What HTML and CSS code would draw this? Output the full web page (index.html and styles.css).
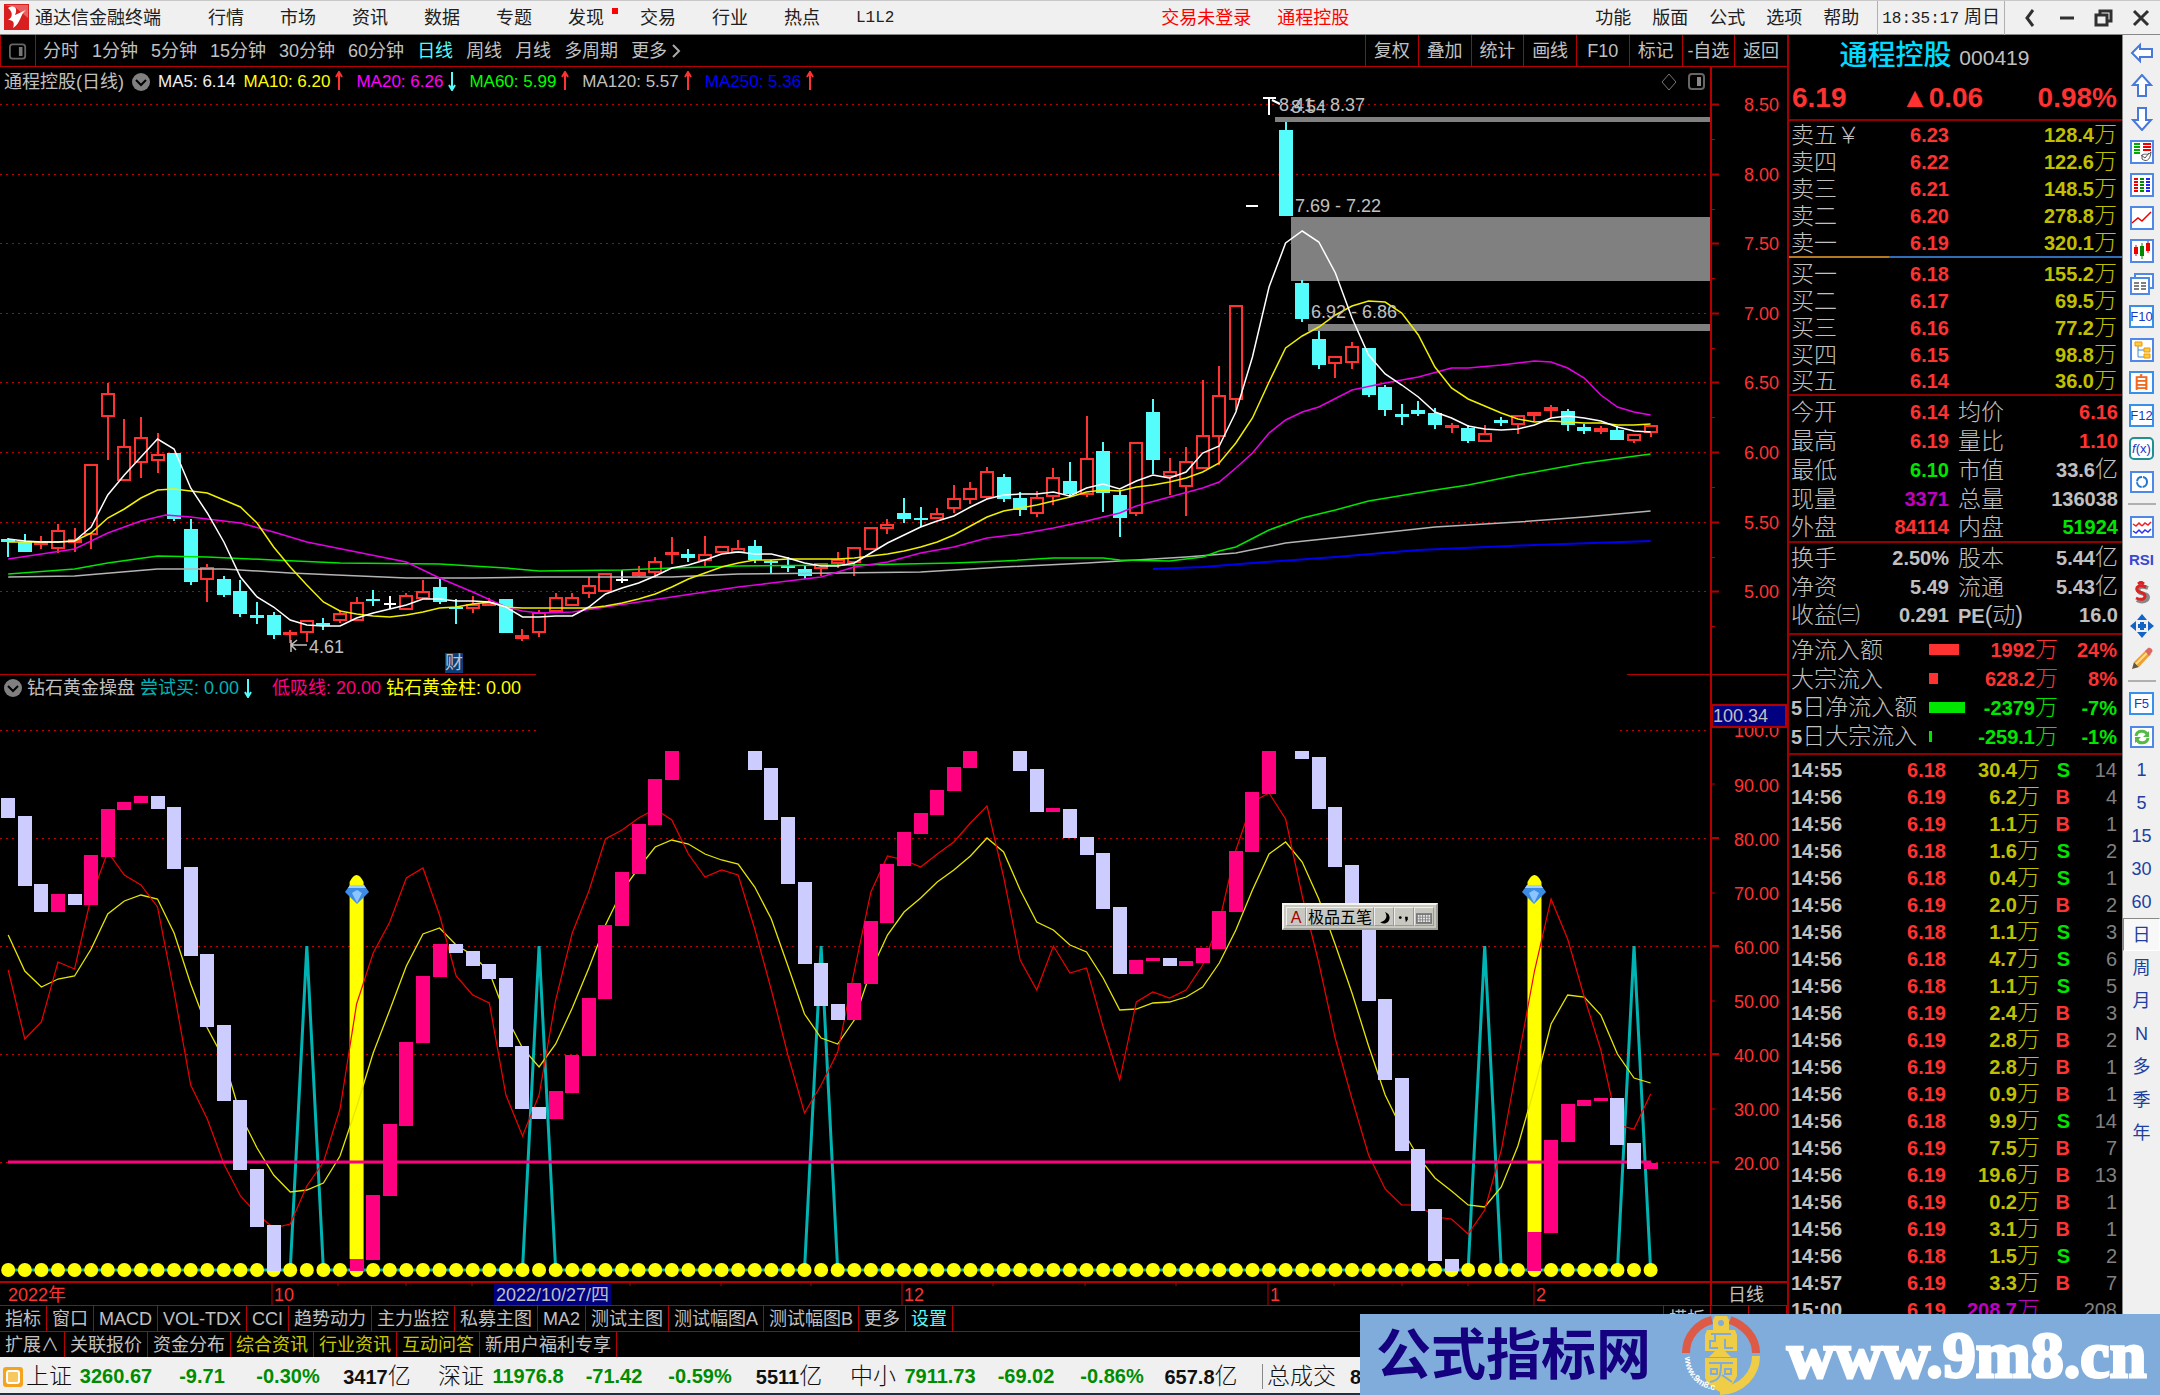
FILE: index.html
```html
<!DOCTYPE html>
<html lang="zh-CN">
<head>
<meta charset="utf-8">
<title>通达信金融终端</title>
<link rel="stylesheet" href="styles.css">
</head>
<body>
<header class="topbar">
  <svg class="logo" viewBox="0 0 25 26" aria-hidden="true"><rect width="25" height="26" fill="#d81e1e"/><path d="M1 1h23v13L12 4z" fill="#e86060"/><path d="M4 4c7-4 10 1 7 7l11-5c-6 4-5 13-13 18 2-6 0-8-5-8 5-3 5-8 0-12z" fill="#fff"/></svg>
  <span class="brand">通达信金融终端</span>
  <nav class="menu">
    <button>行情</button><button>市场</button><button>资讯</button><button>数据</button><button>专题</button><button class="has-dot">发现</button><button>交易</button><button>行业</button><button>热点</button><button class="mono">L1L2</button>
  </nav>
  <div class="session"><a href="#login">交易未登录</a><a href="#stock">通程控股</a></div>
  <nav class="menu menu-right"><button>功能</button><button>版面</button><button>公式</button><button>选项</button><button>帮助</button></nav>
  <time class="clock"><span class="mono">18:35:17</span> 周日</time>
  <div class="window-buttons">
    <button aria-label="后退"><svg viewBox="0 0 22 22"><path d="M14 3 8 11l6 8" /></svg></button>
    <button aria-label="最小化"><svg viewBox="0 0 22 22"><path d="M4 11h14"/></svg></button>
    <button aria-label="还原"><svg viewBox="0 0 22 22"><path d="M7 8V4h11v10h-4M3 8h11v10H3z"/></svg></button>
    <button aria-label="关闭"><svg viewBox="0 0 22 22"><path d="m4 4 14 14M18 4 4 18"/></svg></button>
  </div>
</header>

<main class="workspace">
  <section class="charts">
    <div class="periods">
      <button class="pane-toggle" aria-label="侧栏"><svg viewBox="0 0 20 18"><rect x="1" y="1" width="17" height="16" rx="3" fill="none" stroke="#666" stroke-width="2"/><path d="M11 4h4v10h-4z" fill="#777"/></svg></button>
      <nav class="period-list">
        <button>分时</button><button>1分钟</button><button>5分钟</button><button>15分钟</button><button>30分钟</button><button>60分钟</button><button class="active">日线</button><button>周线</button><button>月线</button><button>多周期</button><button>更多<svg class="more" viewBox="0 0 10 16"><path d="m2 2 6 6-6 6"/></svg></button>
      </nav>
      <div class="chart-actions">
        <button>复权</button><button>叠加</button><button>统计</button><button>画线</button><button>F10</button><button>标记</button><button>-自选</button><button>返回</button>
      </div>
    </div>

    <div class="legend">
      <div class="legend-items">
        <span>通程控股(日线)</span>
        <svg class="chev" viewBox="0 0 18 18"><circle cx="9" cy="9" r="9" fill="#808080"/><path d="m4 7 5 5 5-5" fill="none" stroke="#000" stroke-width="2"/></svg>
        <span class="c-white">MA5: 6.14</span>
        <span class="c-yellow">MA10: 6.20<svg class="arrow up" viewBox="0 0 8 20"><path d="M4 1v18M1 6l3-5 3 5"/></svg></span>
        <span class="c-magenta">MA20: 6.26<svg class="arrow down" viewBox="0 0 8 20"><path d="M4 1v18M1 14l3 5 3-5"/></svg></span>
        <span class="c-green">MA60: 5.99<svg class="arrow up" viewBox="0 0 8 20"><path d="M4 1v18M1 6l3-5 3 5"/></svg></span>
        <span>MA120: 5.57<svg class="arrow up" viewBox="0 0 8 20"><path d="M4 1v18M1 6l3-5 3 5"/></svg></span>
        <span class="c-blue">MA250: 5.36<svg class="arrow up" viewBox="0 0 8 20"><path d="M4 1v18M1 6l3-5 3 5"/></svg></span>
        <svg class="legend-tools" viewBox="0 0 46 18"><path d="m9 1 7 8-7 8-7-8z" fill="none" stroke="#777"/><rect x="29" y="1" width="15" height="15" rx="3" fill="none" stroke="#666" stroke-width="2"/><path d="M37 4h4v9h-4z" fill="#888"/></svg>
      </div>
      <div class="axis-head"></div>
    </div>
    <svg id="price" class="plot" viewBox="0 93 1787 581" role="img" aria-label="日K线图"></svg>

    <div class="sub-panel">
      <div class="legend">
        <div class="legend-items sub-items">
          <svg class="chev" viewBox="0 0 18 18"><circle cx="9" cy="9" r="9" fill="#808080"/><path d="m4 7 5 5 5-5" fill="none" stroke="#000" stroke-width="2"/></svg>
          <span>钻石黄金操盘</span>
          <span class="c-teal">尝试买: 0.00<svg class="arrow down" viewBox="0 0 8 20"><path d="M4 1v18M1 14l3 5 3-5"/></svg></span>
          <span class="c-pink">低吸线: 20.00</span>
          <span class="c-yellow">钻石黄金柱: 0.00</span>
        </div>
        <div class="axis-head"></div>
      </div>
      <svg id="signal" class="plot" viewBox="0 701 1787 604" role="img" aria-label="钻石黄金操盘指标"></svg>
      <div class="ime">
        <span class="ime-a">A</span><span>极品五笔</span>
        <span><svg viewBox="0 0 14 16"><path d="M8 1c3 4 2 9-5 11 4 3 10 1 10-5 0-3-2-5-5-6z"/></svg></span>
        <span><svg viewBox="0 0 14 16"><circle cx="3" cy="7" r="1.500"/><path d="M8 6h3v3l-2 3z"/></svg></span>
        <span><svg viewBox="0 0 18 14"><rect x="0" y="1" width="18" height="12" fill="#777"/><path d="M2 4h14M2 7h14M2 10h14" stroke="#eee" stroke-width="2" stroke-dasharray="2 1"/></svg></span>
      </div>
    </div>

    <nav class="tabs">
      <button>指标</button><button>窗口</button><button>MACD</button><button>VOL-TDX</button><button>CCI</button><button>趋势动力</button><button>主力监控</button><button>私募主图</button><button>MA2</button><button>测试主图</button><button>测试幅图A</button><button>测试幅图B</button><button>更多</button><button class="c-cyan">设置</button>
      <button class="push">模板</button><button class="sq">+</button><button class="sq">-</button>
    </nav>
    <nav class="tabs">
      <button>扩展∧</button><button>关联报价</button><button>资金分布</button><button class="c-olive">综合资讯</button><button class="c-olive">行业资讯</button><button class="c-olive">互动问答</button><button>新用户福利专享</button>
    </nav>
  </section>

  <aside class="quote">
    <div class="quote-head">
      <h1>通程控股 <span>000419</span></h1>
      <p><span>6.19</span><span class="chg">▲0.06</span><span>0.98%</span></p>
    </div>
    <table class="book">
      <tr><th>卖五￥</th><td class="r">6.23</td><td>128.4<i>万</i></td></tr>
      <tr><th>卖四</th><td class="r">6.22</td><td>122.6<i>万</i></td></tr>
      <tr><th>卖三</th><td class="r">6.21</td><td>148.5<i>万</i></td></tr>
      <tr><th>卖二</th><td class="r">6.20</td><td>278.8<i>万</i></td></tr>
      <tr><th>卖一</th><td class="r">6.19</td><td>320.1<i>万</i></td></tr>
    </table>
    <div class="ratio"><span></span></div>
    <table class="book">
      <tr><th>买一</th><td class="r">6.18</td><td>155.2<i>万</i></td></tr>
      <tr><th>买二</th><td class="r">6.17</td><td>69.5<i>万</i></td></tr>
      <tr><th>买三</th><td class="r">6.16</td><td>77.2<i>万</i></td></tr>
      <tr><th>买四</th><td class="r">6.15</td><td>98.8<i>万</i></td></tr>
      <tr><th>买五</th><td class="r">6.14</td><td>36.0<i>万</i></td></tr>
    </table>
    <table class="stats first">
      <tr><th>今开</th><td class="r">6.14</td><th>均价</th><td class="r">6.16</td></tr>
      <tr><th>最高</th><td class="r">6.19</td><th>量比</th><td class="r">1.10</td></tr>
      <tr><th>最低</th><td class="g">6.10</td><th>市值</th><td>33.6<i>亿</i></td></tr>
      <tr><th>现量</th><td class="m">3371</td><th>总量</th><td>136038</td></tr>
      <tr><th>外盘</th><td class="r">84114</td><th>内盘</th><td class="g">51924</td></tr>
    </table>
    <table class="stats loose">
      <tr><th>换手</th><td>2.50%</td><th>股本</th><td>5.44<i>亿</i></td></tr>
      <tr><th>净资</th><td>5.49</td><th>流通</th><td>5.43<i>亿</i></td></tr>
      <tr><th>收益㈢</th><td>0.291</td><th><b>PE</b>(动)</th><td>16.0</td></tr>
    </table>
    <table class="flow">
      <tr class="r"><th>净流入额</th><td><span class="bar" style="width:30px"></span></td><td>1992<i>万</i></td><td>24%</td></tr>
      <tr class="r"><th>大宗流入</th><td><span class="bar" style="width:9px"></span></td><td>628.2<i>万</i></td><td>8%</td></tr>
      <tr class="g"><th><b>5</b>日净流入额</th><td><span class="bar" style="width:36px"></span></td><td>-2379<i>万</i></td><td>-7%</td></tr>
      <tr class="g"><th><b>5</b>日大宗流入</th><td><span class="bar" style="width:3px"></span></td><td>-259.1<i>万</i></td><td>-1%</td></tr>
    </table>
    <table class="ticks">
      <tr><td>14:55</td><td>6.18</td><td>30.4<i>万</i></td><td class="g">S</td><td>14</td></tr>
      <tr><td>14:56</td><td>6.19</td><td>6.2<i>万</i></td><td class="r">B</td><td>4</td></tr>
      <tr><td>14:56</td><td>6.19</td><td>1.1<i>万</i></td><td class="r">B</td><td>1</td></tr>
      <tr><td>14:56</td><td>6.18</td><td>1.6<i>万</i></td><td class="g">S</td><td>2</td></tr>
      <tr><td>14:56</td><td>6.18</td><td>0.4<i>万</i></td><td class="g">S</td><td>1</td></tr>
      <tr><td>14:56</td><td>6.19</td><td>2.0<i>万</i></td><td class="r">B</td><td>2</td></tr>
      <tr><td>14:56</td><td>6.18</td><td>1.1<i>万</i></td><td class="g">S</td><td>3</td></tr>
      <tr><td>14:56</td><td>6.18</td><td>4.7<i>万</i></td><td class="g">S</td><td>6</td></tr>
      <tr><td>14:56</td><td>6.18</td><td>1.1<i>万</i></td><td class="g">S</td><td>5</td></tr>
      <tr><td>14:56</td><td>6.19</td><td>2.4<i>万</i></td><td class="r">B</td><td>3</td></tr>
      <tr><td>14:56</td><td>6.19</td><td>2.8<i>万</i></td><td class="r">B</td><td>2</td></tr>
      <tr><td>14:56</td><td>6.19</td><td>2.8<i>万</i></td><td class="r">B</td><td>1</td></tr>
      <tr><td>14:56</td><td>6.19</td><td>0.9<i>万</i></td><td class="r">B</td><td>1</td></tr>
      <tr><td>14:56</td><td>6.18</td><td>9.9<i>万</i></td><td class="g">S</td><td>14</td></tr>
      <tr><td>14:56</td><td>6.19</td><td>7.5<i>万</i></td><td class="r">B</td><td>7</td></tr>
      <tr><td>14:56</td><td>6.19</td><td>19.6<i>万</i></td><td class="r">B</td><td>13</td></tr>
      <tr><td>14:56</td><td>6.19</td><td>0.2<i>万</i></td><td class="r">B</td><td>1</td></tr>
      <tr><td>14:56</td><td>6.19</td><td>3.1<i>万</i></td><td class="r">B</td><td>1</td></tr>
      <tr><td>14:56</td><td>6.18</td><td>1.5<i>万</i></td><td class="g">S</td><td>2</td></tr>
      <tr><td>14:57</td><td>6.19</td><td>3.3<i>万</i></td><td class="r">B</td><td>7</td></tr>
      <tr><td>15:00</td><td>6.19</td><td class="m">208.7<i>万</i></td><td></td><td>208</td></tr>
    </table>
  </aside>

  <nav class="tools">
    <button aria-label="左"><svg viewBox="0 0 24 24"><path class="ar" d="M2 12 10 4v4h12v8H10v4z"/></svg></button>
    <button aria-label="上"><svg viewBox="0 0 24 24"><path class="ar" d="M12 1 3 11h5v11h8V11h5z"/></svg></button>
    <button aria-label="下"><svg viewBox="0 0 24 24"><path class="ar" d="M12 23 3 13h5V1h8v12h5z"/></svg></button>
    <button aria-label="委托"><svg viewBox="0 0 24 24"><rect class="fr" x="1" y="1" width="22" height="22"/><path d="M4 4h6M4 7h6M4 10h6M4 13h6" stroke="#0a0" stroke-width="2"/><path d="M13 4h8M13 7h8M13 10h8" stroke="#e00" stroke-width="2"/><path d="M12 15c3-2 6 1 9-3-1 9-5 10-9 7zM11 15l4 3 4-5" fill="#fff" stroke="#555"/></svg></button>
    <button aria-label="报价"><svg viewBox="0 0 24 24"><rect class="fr" x="1" y="1" width="22" height="22"/><g stroke-width="4" stroke-dasharray="2 1"><path d="M6 5v15" stroke="#e00"/><path d="M12 5v15" stroke="#080"/><path d="M18 5v15" stroke="#22f"/></g></svg></button>
    <button aria-label="走势"><svg viewBox="0 0 24 24"><rect class="fr" x="1" y="1" width="22" height="22"/><path d="m2 17 6-5 4 3 9-9" fill="none" stroke="#e00" stroke-width="1.500"/></svg></button>
    <button aria-label="K线"><svg viewBox="0 0 24 24"><rect class="fr" x="1" y="1" width="22" height="22"/><path d="M6 6v11M18 2v12" stroke="#e00"/><path d="M12 4v16" stroke="#080"/><path d="M4 8h4v7H4zM16 4h4v8h-4z" fill="#e00"/><path d="M10 7h4v10h-4z" fill="#080"/></svg></button>
    <button aria-label="多窗"><svg viewBox="0 0 24 24"><rect class="fr" x="5" y="2" width="18" height="14"/><rect class="fr" x="1" y="6" width="18" height="16"/><path d="M4 11h5M4 14h5M4 17h5M11 11h5M11 14h5M11 17h5" stroke="#555" stroke-width="1.500"/></svg></button>
    <button class="boxed">F10</button>
    <button aria-label="树"><svg viewBox="0 0 24 24"><rect class="fr" x="1" y="1" width="22" height="22"/><path d="M8 8v11h7M8 12h7" fill="none" stroke="#48c"/><path d="M5 4h7v4H5zM14 10h6v4h-6zM14 16h6v4h-6z" fill="#fc4" stroke="#e90"/></svg></button>
    <button class="boxed orange">自</button>
    <button class="boxed">F12</button>
    <button class="boxed round"><em>f</em>(x)</button>
    <button aria-label="刷新圈"><svg viewBox="0 0 24 24"><rect class="fr" x="1" y="2" width="22" height="20"/><circle cx="12" cy="12" r="5" fill="none" stroke="#27c" stroke-width="2" stroke-dasharray="7 1"/></svg></button>
    <hr>
    <button aria-label="叠加"><svg viewBox="0 0 24 24"><rect class="fr" x="1" y="2" width="22" height="20"/><g fill="none" stroke-width="1.500"><path d="m3 9 3 2 3-3 3 3" stroke="#e22"/><path d="m12 11 3-3 3 2 3-3" stroke="#e22"/><path d="m3 16 3 2 3-3 3 3 3-3 3 2 3-3" stroke="#33e"/></g></svg></button>
    <button class="rsi">RSI</button>
    <button aria-label="资金"><svg viewBox="0 0 24 24"><path d="M18 7c-8-3-11 0-9 4 1 2 9 1 9 5s-6 6-11 3" fill="none" stroke="#888" stroke-width="4"/><path d="M16 6C9 3 6 6 7 9c1 3 8 2 8 6s-5 4-9 2M8 3l3-2 3 2" fill="none" stroke="#d22" stroke-width="3"/></svg></button>
    <button aria-label="移动"><svg viewBox="0 0 24 24"><path d="m12 0 5 6H7zM12 24l-5-6h10zM0 12l6-5v10zM24 12l-6 5V7zM10 8h4v2h2v4h-2v2h-4v-2H8v-4h2z" fill="#1464c8"/></svg></button>
    <button aria-label="画笔"><svg viewBox="0 0 24 24"><path d="m2 22 2-7 5 5z" fill="#654"/><path d="M4 15 16 3l5 4L9 20z" fill="#f0a030"/><path d="M6 17 18 5" stroke="#fd8" stroke-width="2"/><path d="m15 4 3-3c2-1 6 2 4 4l-3 4z" fill="#d66"/></svg></button>
    <hr>
    <button class="boxed">F5</button>
    <button aria-label="更新"><svg viewBox="0 0 24 24"><rect class="fr" x="1" y="2" width="22" height="20"/><path d="M6 11c1-6 9-6 11-2M18 13c-1 6-9 6-11 2" fill="none" stroke="#5b4" stroke-width="3"/><path d="M19 6v6h-6zM5 18v-6h6z" fill="#5b4"/></svg></button>
    <button>1</button><button>5</button><button>15</button><button>30</button><button>60</button><button class="pressed">日</button><button>周</button><button>月</button><button>N</button><button>多</button><button>季</button><button>年</button>
  </nav>
</main>

<footer class="status">
  <svg class="status-icon" viewBox="0 0 20 20"><rect width="20" height="20" rx="3" fill="#f5a31c"/><rect x="4" y="4" width="12" height="12" rx="2" fill="#f8c860" stroke="#fff" stroke-width="2"/></svg>
  <div class="index"><i>上证</i><span>3260.67</span><span>-9.71</span><span>-0.30%</span><b>3417<i>亿</i></b></div>
  <div class="index"><i>深证</i><span>11976.8</span><span>-71.42</span><span>-0.59%</span><b>5511<i>亿</i></b></div>
  <div class="index"><i>中小</i><span>7911.73</span><span>-69.02</span><span>-0.86%</span><b>657.8<i>亿</i></b></div>
  <div class="turnover"><i>总成交</i><b>8325<i>亿</i></b></div>
</footer>

<a class="banner" href="#home">
  <span class="banner-name">公式指标网</span>
  <svg viewBox="0 0 80 80" aria-hidden="true">
    <path d="M5 38C5 20 18 8 31 5M49 5c14 5 26 17 26 33" fill="none" stroke="#dc5a46" stroke-width="8"/>
    <path d="M75 41c0 18-14 34-36 35" fill="none" stroke="#f0cd46" stroke-width="8"/>
    <path d="M34 1h12l2 4v10h6l2 5v16H44l6 6H28l6-6H24V20l2-5h6V5z" fill="#f0cd46"/>
    <path d="M24 43h32v18c-5 10-10 14-16 16-6-2-12-6-16-14z" fill="#f0cd46"/>
    <circle cx="40" cy="8" r="3" fill="#80acdb"/>
    <path d="M30 19h20M34 19v7h-5v7h8M44 24v9h8M28 48h24M30 54h6v5h-6zM44 54h6v5h-6zM29 67c10-2 11-6 11-19M41 60l10 7" fill="none" stroke="#80acdb" stroke-width="2"/>
    <path id="coin" d="M4 42c0 17 12 30 28 33" fill="none"/>
    <text class="coin-text"><textPath href="#coin">www.9m8.cn</textPath></text>
  </svg>
  <span class="banner-url">www.9m8.cn</span>
</a>
<script src="chart.js"></script>
</body>
</html>
```
FILE: styles.css
```css
* { box-sizing: border-box; }
body {
  margin: 0;
  min-height: 100vh;
  display: flex;
  flex-direction: column;
  background: #000;
  color: #c0c0c0;
  font: 18px/24px "Liberation Sans", "Noto Sans CJK SC", sans-serif;
  white-space: nowrap;
}
button { font: inherit; color: inherit; background: none; border: 0; padding: 0; margin: 0; }
a { color: inherit; text-decoration: none; }
i { font-style: normal; }
.mono { font-family: "Liberation Mono", monospace; font-size: 16px; }

/* top bar */
.topbar {
  display: flex;
  align-items: center;
  height: 35px;
  border-top: 1px solid #c8c8c8;
  border-bottom: 1px solid #888;
  background: #f0f0f0;
  color: #202020;
}
.logo { width: 25px; height: 26px; margin: 0 6px 2px 4px; }
.menu { display: flex; gap: 36px; margin-left: 47px; }
.has-dot { position: relative; }
.has-dot::after { content: ""; position: absolute; right: -14px; top: 2px; width: 6px; height: 6px; background: #f00; }
.session { display: flex; gap: 26px; margin-left: auto; color: #f00; }
.menu-right { gap: 21px; margin-left: 246px; }
.clock { margin-left: 18px; padding: 4px 4px; border: solid #b0b0b0; border-width: 0 1px; }
.window-buttons { display: flex; gap: 15px; padding: 0 8px 0 14px; }
.window-buttons svg { display: block; width: 22px; height: 22px; fill: none; stroke: #303030; stroke-width: 3; }

.workspace { display: grid; grid-template-columns: minmax(0, 1fr) 336px 37px; }

/* chart side */
.periods { display: flex; height: 32px; border-bottom: 1px solid #b40000; }
.pane-toggle { width: 36px; border: solid #b40000; border-width: 0 1px; }
.pane-toggle svg { width: 18px; height: 17px; vertical-align: middle; }
.period-list { display: flex; align-items: center; gap: 13px; padding: 1px 0 0 7px; }
.period-list .active { color: #54fcfc; }
.more { width: 10px; height: 16px; margin-left: 4px; fill: none; stroke: #aaa; stroke-width: 2; vertical-align: -2px; }
.chart-actions { display: grid; grid-template-columns: repeat(8, 1fr); width: 422px; margin-left: auto; }
.chart-actions button { border-left: 1px solid #b40000; padding-top: 1px; }

.legend { display: flex; height: 26px; }
.legend-items { flex: 1; display: flex; align-items: center; gap: 8px; padding: 3px 0 0 4px; font-size: 17px; }
.legend-items > span:first-child { font-size: 18px; }
.axis-head { width: 77px; border-left: 2px solid #b40000; }
.chev { width: 18px; height: 18px; }
.arrow { width: 8px; height: 20px; margin: 0 5px; fill: none; stroke-width: 2; vertical-align: -4px; }
.arrow.up { stroke: #ff3232; }
.arrow.down { stroke: #54fcfc; }
.legend-tools { width: 46px; height: 18px; margin: 0 4px 0 auto; }
.plot { display: block; width: 100%; height: auto; }
.plot text { font-size: 18px; fill: #c0c0c0; }
.plot .ax { fill: #ff3232; }
.plot rect { shape-rendering: crispEdges; }

.sub-panel { position: relative; border-top: 1px solid transparent; border-image: linear-gradient(90deg, #b40000 30%, #000 30%, #000 91%, #b40000 91%) 1; border-width: 1px 0 0; }
.sub-items { font-size: 18px; gap: 5px; padding-top: 0; }
.sub-items .c-teal { padding-right: 10px; }

.ime {
  position: absolute;
  left: 71.740%;
  top: 228px;
  display: flex;
  height: 27px;
  padding: 2px;
  background: #c8c8c0;
  border: 2px outset #f4f4ec;
  color: #000;
  font-size: 16px;
  line-height: 19px;
}
.ime span { padding: 0 1px; border: 1px outset #eee; }
.ime svg { width: 16px; height: 15px; vertical-align: middle; }
.ime-a { color: #a00000; width: 20px; text-align: center; }

.tabs { display: flex; height: 26px; border-top: 1px solid #b40000; }
.tabs button { padding: 1px 5px 0; border-right: 1px solid #b40000; }
.tabs .push { margin-left: auto; border-left: 1px solid #b40000; }
.tabs .sq { width: 38px; }

.c-white { color: #f0f0f0; }
.c-yellow { color: #ff0; }
.c-magenta { color: #f0f; }
.c-green { color: #0f0; }
.c-blue { color: #00f; }
.c-teal { color: #00b4b4; }
.c-pink { color: #ff0080; }
.c-cyan { color: #54fcfc; }
.c-olive { color: #c8c800; }

/* quote panel */
.quote { border-left: 2px solid #a00000; border-right: 1px solid #888; font-size: 20px; font-weight: 700; }
.quote-head { height: 86px; border-bottom: 2px solid #900000; padding-top: 3px; }
.quote-head h1 { margin: 0; padding-right: 42px; font-size: 28px; line-height: 36px; font-weight: 500; color: #00dcff; text-align: center; }
.quote-head h1 span { font-size: 21px; color: #c0c0c0; font-weight: 400; }
.quote-head p { display: flex; justify-content: space-between; margin: 0; padding: 6px 5px 0 3px; font-size: 28px; line-height: 32px; color: #ff3232; }
.quote table { width: 100%; table-layout: fixed; border-collapse: collapse; border-bottom: 2px solid #900000; }
.quote tr { height: 27px; }
.quote td, .quote th { padding: 0; line-height: 26px; text-align: right; }
.quote th { font-size: 23px; font-weight: 300; text-align: left; padding-left: 2px; }
.quote th b { font-size: 20px; font-weight: 700; }
.quote i { font-size: 23px; font-weight: 300; line-height: 20px; }
.quote td:last-child { padding-right: 5px; }
.book th { width: 81px; }
.book td:nth-child(2) { width: 79px; }
.book td:last-child { color: #c0c000; }
.quote .book:first-of-type { border: 0; }
.ratio { height: 4px; border-bottom: 2px solid #000; background: #2f6eb4; }
.ratio span { display: block; width: 30%; height: 2px; background: #b4781e; }
.quote .stats tr, .quote .flow tr { height: 29px; }
.stats th:first-child { width: 81px; }
.stats td:nth-child(2) { width: 79px; }
.stats th:nth-child(3) { width: 80px; padding-left: 9px; }
.stats td:last-child { padding-right: 4px; }
.stats.first { margin-top: 1px; }
.stats.loose tr:last-child { height: 33px; }
.stats.loose tr:last-child > * { padding-bottom: 4px; }
.flow th { width: 140px; }
.flow td:nth-child(2) { width: 40px; text-align: left; }
.flow td:nth-child(3) { width: 89px; }
.quote .flow tr:last-child { height: 32px; }
.quote .flow tr:last-child > * { padding-bottom: 2px; }
.flow th { color: #c0c0c0; }
.bar { display: block; height: 11px; background: currentColor; }
.quote .ticks { border: 0; margin-top: 1px; }
.ticks td:first-child { width: 60px; text-align: left; padding-left: 2px; }
.ticks td:nth-child(2) { width: 97px; color: #ff3232; }
.ticks td:nth-child(3) { width: 94px; color: #c0c000; }
.ticks td:nth-child(4) { width: 30px; }
.ticks td:last-child { color: #808080; font-weight: 400; }
.r, .ticks td.r { color: #ff3232; }
.g, .ticks td.g { color: #00e600; }
.m, .ticks td.m { color: #c000c0; }

/* tool strip */
.tools { display: flex; flex-direction: column; align-items: center; padding-top: 1px; background: #f0f0f0; color: #2040a0; }
.tools button { height: 33px; width: 37px; display: flex; align-items: center; justify-content: center; }
.tools svg { width: 24px; height: 24px; }
.tools hr { width: 28px; height: 2px; margin: 5px 0; border: 0; background: #b0b0b0; }
.fr { fill: #fff; stroke: #5088e8; stroke-width: 2; }
.ar { fill: #fff; stroke: #4878d8; stroke-width: 2; }
.tools .boxed { width: 25px; height: 23px; margin: 5px 0; border: 2px solid #3890e8; background: #fff; font-size: 13px; line-height: 18px; color: #1838c8; }
.tools .orange { color: #f06a20; font-size: 16px; font-weight: 700; }
.tools .round { border-color: #209090; border-radius: 5px; font-size: 13px; }
.tools .rsi { font-size: 15px; font-weight: 700; color: #3848d0; }
.tools .pressed { background: #f8f8f8; border: 1px solid; border-color: #888 #fff #fff #888; }

/* status bar */
.status { flex: 1 0 36px; display: flex; align-items: center; padding: 3px 0 0 3px; background: #f0f0f0; border-bottom: 2px solid #203040; color: #101010; font-size: 20px; }
.status i { font-size: 23px; font-weight: 300; }
.status-icon { width: 20px; height: 20px; margin-right: 3px; }
.index { display: grid; grid-template-columns: 49px 82px 90px 82px 96px; padding-right: 13px; text-align: center; }
.index > i { text-align: left; }
.index span { font-weight: 700; color: #008c00; }
.turnover { display: flex; gap: 14px; padding-left: 4px; border-left: 1px solid #888; }

/* site banner over the lower right corner */
.banner { position: fixed; right: 0; bottom: 0; display: flex; align-items: center; width: 800px; height: 81px; background: #80acdb; }
.banner svg { width: 80px; height: 80px; margin: 0 26px 0 30px; }
.banner-name { padding-left: 16px; font-size: 55px; line-height: 80px; font-weight: 700; color: #150080; }
.banner-url { font: 700 66px/80px "Liberation Serif", serif; color: #fff; -webkit-text-stroke: 3px #fff; }
.coin-text { font-size: 9px; font-weight: 700; fill: #fff; }
```
FILE: chart.js
```js
const STEP = 16.59, X0 = 8.2;
const x = i => X0 + STEP * i;
const line = (x1, y1, x2, y2, c, w = 1, extra = '') => `<line x1="${x1}" y1="${y1}" x2="${x2}" y2="${y2}" stroke="${c}" stroke-width="${w}" ${extra}/>`;
const rect = (l, t, w, h, c, s = 'none') => `<rect x="${l}" y="${t}" width="${w}" height="${h}" fill="${c}" stroke="${s}" stroke-width="2"/>`;
const text = (l, y, s, cls = '', anchor = 'start') => `<text x="${l}" y="${y}" class="${cls}" text-anchor="${anchor}">${s}</text>`;
const poly = (pts, c, w) => `<polyline points="${pts.map(p => p.join()).join(' ')}" fill="none" stroke="${c}" stroke-width="${w}"/>`;
const dense = (ys, c, w = 1) => poly(ys.map((y, i) => [x(i), y]), c, w);
const sparse = (a, c, w = 2) => poly(a.map(([i, y]) => [x(i), y]), c, w);
const dots = (x1, x2, y) => line(x1, y, x2, y, '#c00000', 1, 'stroke-dasharray="2 4"');

/* candles: kind (d down, u up, w doji), body top, body bottom, high, low */
const candles = `d539,542,538,557 d542,552,534,552 u541,545,536,549 u530,549,524,553 u539,543,528,552 u464,535,464,549 u393,417,383,460 u446,481,419,481 u437,463,417,478 u454,461,433,473
d453,519,453,521 d529,582,519,585 u567,580,564,602 d579,595,576,597 d591,614,580,617 d615,618,602,624 d615,635,612,639 u632,634,630,643 u620,633,620,642 d623,626,618,630
u613,621,610,623 u602,621,597,621 d599,601,590,606 w604,604,596,609 u595,610,593,610 u591,599,580,599 d587,602,578,604 d607,609,599,624 u604,609,596,613 u602,606,598,606
d599,633,599,633 u635,639,629,641 u612,633,610,637 u597,612,593,612 u597,606,593,606 u585,594,577,598 u573,592,573,592 w580,580,570,583 u572,576,566,577 u561,573,557,578
u552,555,537,564 d554,558,549,562 u554,561,536,566 u546,553,546,553 u548,553,540,553 d546,560,540,563 d561,562,560,574 d565,568,557,572 d569,576,565,579 u563,569,563,576
u559,564,552,568 u547,563,547,576 u527,550,527,550 u524,529,519,534 d513,519,498,523 d518,520,507,527 u513,519,508,519 u498,509,485,513 u488,500,482,504 u471,498,467,499
d477,499,474,502 d498,510,492,516 u497,514,491,517 u477,497,468,505 d481,494,462,497 u458,495,416,497 d451,493,442,512 d495,518,490,537 u442,514,442,516 d412,460,399,474
u471,477,458,495 u461,487,447,516 u435,469,380,469 u395,437,366,465 u305,400,305,410 w206,206,206,206 w98,98,98,115 d130,216,122,216 d283,319,280,322 d339,365,331,369
u356,364,356,378 u346,363,342,369 d348,395,348,397 d387,410,385,416 d414,417,404,425 d410,414,401,416 d413,425,408,429 u425,427,423,433 d428,441,425,443 u433,442,425,442
d420,423,417,426 u415,425,415,434 u412,416,412,421 u407,411,405,418 d411,425,409,431 d427,431,424,434 u428,432,426,434 d430,440,426,440 u434,441,434,443 u425,433,425,437`.split(/\s+/);

const ma5 = [539,541,542,542,541,527,495,475,457,439,449,488,513,542,577,597,607,620,625,626,626,618,613,609,605,599,599,601,601,602,607,617,617,616,616,607,594,588,583,576,568,565,560,554,552,554,554,558,563,566,566,563,553,543,535,527,521,516,507,499,495,494,494,492,496,488,484,489,481,475,478,472,453,446,412,357,287,243,231,242,273,318,355,374,385,397,412,418,426,429,430,429,425,418,416,418,421,427,431,432];
const ma10 = [542,542,542,542,541,533,518,509,498,490,489,491,493,500,507,523,547,567,585,602,611,614,616,617,615,612,608,607,604,602,607,608,608,608,608,608,606,603,599,594,587,579,573,567,563,560,560,559,559,559,559,558,556,554,551,547,542,535,526,517,511,508,505,501,497,492,490,491,487,485,482,478,472,463,443,418,382,348,336,327,315,306,301,302,313,335,367,388,399,406,413,419,422,421,422,423,423,425,425,424];
const ma20 = [[0,559],[4,549],[6,533],[8,521],[9.5,515],[11,517],[14,523],[16,532],[18,542],[21,552],[24,562],[26,578],[28,592],[30,607],[31,611],[32,613],[34,612],[36,607],[38,602],[40,597],[42,592],[44,587],[46,583],[49,577],[51,567],[53,562],[55,553],[57,547],[59,538],[61,534],[63,528],[65,521],[67,513],[68,506],[70,497],[72,488],[73,482],[74,468],[75,453],[76,433],[77,420],[78,412],[79,407],[81,390],[83,383],[85,377],[87,368],[88,368],[90,365],[92,361],[93,362],[94,368],[95,378],[96,395],[97,407],[98,412],[99,415]];
const ma60 = [[0,574],[4,569],[6,563],[9,556],[12,557],[16,560],[20,563],[26,564],[30,568],[32,571],[37,570],[40,568],[44,566],[51,565],[57,563],[60,561],[63,558],[66,558],[67,560],[70,561],[72,557],[73,551],[74,547],[76,530],[78,518],[80,510],[82,501],[86,490],[88,485],[91,475],[95,463],[99,454]];
const ma120 = [[0,577],[4,576],[9,569],[13,569],[17,573],[24,578],[28,578],[32,577],[40,577],[44,574],[50,573],[55,572],[60,567],[65,563],[68,560],[71,557],[74,553],[77,543],[81,536],[86,527],[91,522],[95,517],[99,511]];
const ma250 = [[69,569],[72,567],[75,563],[80,557],[85,550],[92,545],[99,541]];

let out = '';
['8.50', '8.00', '7.50', '7.00', '6.50', '6.00', '5.50', '5.00'].forEach((p, k) => {
  const y = 104.5 + Math.round(69.6 * k);
  out += dots(0, 1710, y) + line(1711, y, 1719, y, '#b40000', 2) + line(1711, y + 35, 1715, y + 35, '#b40000', 1) + text(1779, y + 6, p, 'ax', 'end');
});
out += rect(1275, 117, 435, 5, '#808080') + rect(1291, 217, 419, 64, '#808080') + rect(1308, 324, 402, 7, '#808080');
candles.forEach((c, i) => {
  const [t, b, h, l] = c.slice(1).split(',').map(Number), k = c[0];
  const col = k === 'd' ? '#54fcfc' : k === 'u' ? '#ff3232' : '#ffffff';
  const cx = Math.round(x(i));
  if (k === 'w') out += line(cx - 6, t, cx + 6, t, col, 2) + line(cx, h, cx, l, col, 2);
  else if (k === 'd') out += line(cx, h, cx, l, col, 2) + rect(cx - 7, t, 14, Math.max(2, b - t), col);
  else out += line(cx, h, cx, t, col, 2) + line(cx, b, cx, l, col, 2) + rect(cx - 6, t + 1, 12, Math.max(1, b - t - 2), 'none', col);
});
out += sparse(ma250, '#0000f0') + sparse(ma120, '#b4b4b4', 1.5) + sparse(ma60, '#00e600', 1.5) + sparse(ma20, '#e600e6', 1.5) + dense(ma10, '#f0f000', 1.5) + dense(ma5, '#ffffff', 1.5);
out += text(1279, 111, '8.41 - 8.37') + text(1291, 113, '8.54') + text(1295, 212, '7.69 - 7.22') + text(1311, 318, '6.92 - 6.86');
out += `<path d="M1264 98h12M1272 100l8 4" stroke="#fff" stroke-width="2" fill="none"/>`;
out += `<path d="M307 645h-15m5-5-6 5 5 5M291 640v12" stroke="#c0c0c0" stroke-width="1.500" fill="none"/>` + text(309, 653, '4.61');
out += rect(445, 653, 18, 20, '#0a3c78') + text(445, 669, '财');
out += line(1711, 93, 1711, 674, '#b40000', 2);
document.getElementById('price').innerHTML = out;

/* columns: index, kind (p rising, l falling), top, bottom */
const columns = `0l798,818 1l816,886 2l884,912 3p894,912 4l894,905 5p855,905 6p809,857 7p802,810 8p796,803 9l796,809 10l807,869 11l867,956 12l954,1027 13l1025,1101 14l1100,1170 15l1169,1227 16l1225,1271
21p1259,1271 22p1195,1260 23p1124,1196 24p1042,1126 25p976,1043 26p944,977 27l944,953 28l951,966 29l964,979 30l978,1047 31l1046,1109 32l1107,1119 33p1091,1119 34p1055,1093 35p998,1056 36p925,999 37p872,926 38p824,874 39p779,825 40p751,780
45l751,770 46l768,820 47l817,884 48l882,964 49l963,1006 50l1004,1020 51p983,1020 52p921,984 53p864,923 54p832,866 55p813,834 56p790,815 57p767,791 58p751,768 61l751,771 62l769,812 63p808,812 64l809,838 65l837,855 66l853,909 67l907,974
68p960,974 69p958,961 70l958,966 71p961,966 72p948,963 73p911,949 74p851,912 75p792,852 76p751,794 78l751,759 79l757,809 80l807,867 81l865,929 82l926,1001 83l999,1080 84l1078,1151 85l1149,1211 86l1209,1261 87l1259,1271
92p1232,1271 93p1140,1233 94p1104,1142 95p1100,1106 96p1098,1101 97l1098,1145 98l1143,1169 99p1163,1169`.split(/\s+/);
const fast = [970,1039,1022,962,969,897,852,875,885,907,992,1085,1119,1164,1196,1214,1228,1224,1186,1162,1109,1004,953,922,878,868,915,976,995,1003,1095,1136,1095,1000,933,891,839,830,818,809,820,854,877,870,875,929,990,1055,1113,1085,1052,971,892,856,860,867,854,842,823,806,877,960,990,946,973,968,1027,1080,1002,992,998,990,965,922,850,802,793,819,896,963,1039,1099,1155,1189,1205,1205,1217,1219,1234,1210,1150,1061,971,899,939,997,1050,1125,1129,1094];
const slow = [935,971,987,979,976,949,914,901,895,899,933,984,1028,1059,1115,1148,1175,1192,1190,1183,1156,1107,1053,1010,966,934,928,945,955,972,1016,1048,1067,1044,1008,968,925,891,868,847,840,844,854,860,864,887,919,966,1014,1038,1044,1020,971,935,912,898,882,870,856,838,852,890,922,930,945,952,978,1010,1009,1003,1002,997,987,963,930,890,854,842,862,899,945,993,1046,1095,1129,1157,1178,1191,1205,1207,1187,1146,1088,1024,995,997,1015,1054,1078,1083];

out = dots(0, 540, 730.5) + dots(1620, 1710, 730.5);
[838, 946, 1054, 1162].forEach(y => { out += dots(0, 1710, y + .5) + line(1711, y, 1719, y, '#b40000', 2); });
[784, 893, 1001, 1109].forEach(y => { out += line(1711, y, 1715, y, '#b40000', 1); });
['90.00', '80.00', '70.00', '60.00', '50.00', '40.00', '30.00', '20.00'].forEach((s, k) => { out += text(1779, 792 + 54 * k, s, 'ax', 'end'); });
out += text(1779, 737, '100.0', 'ax', 'end') + rect(1712, 705, 74, 22, '#000080', '#b40000') + text(1713, 722, '100.34');
const peaks = [18, 32, 49, 89, 98];
out += poly(Array.from({ length: 100 }, (_, i) => [x(i), peaks.includes(i) ? 946 : 1270]), '#00b4b4', 3);
const gold = [[21, 1259], [92, 1232]];
gold.forEach(([i, b]) => { out += `<path d="M${x(i) - 7} ${b}V882q7-14 14 0V${b}z" fill="#ff0"/>`; });
out += dense(slow, '#e6e600', 1.3) + dense(fast, '#f00000', 1.2) + line(8, 1162, 1651, 1162, '#ff0080', 3);
for (let i = 0; i < 100; i++) out += `<circle cx="${x(i)}" cy="1270" r="7" fill="#ff0"/>`;
columns.forEach(c => {
  const [, i, k, t, b] = c.match(/(\d+)([pl])(\d+),(\d+)/);
  out += rect(Math.round(x(+i)) - 7, t, 14, b - t, k === 'p' ? '#ff0080' : '#ccccff');
});
gold.forEach(([i]) => {
  const c = Math.round(x(i));
  out += `<path d="M${c - 12} 892l5-7h14l5 7-12 12z" fill="#3c8ce6"/><path d="M${c - 7} 885h14l2 3h-18z" fill="#a0d0ff"/><path d="M${c - 5} 893l5-3 5 3-5 10z" fill="#8cc4ff"/>`;
});
out += line(0, 1282, 1787, 1282, '#b40000', 2) + line(1711, 701, 1711, 1305, '#b40000', 2);
[[272, '10'], [902, '12'], [1268, '1'], [1534, '2']].forEach(([l, s]) => { out += line(l, 1282, l, 1305, '#b40000', 1) + text(l + 2, 1301, s, 'ax'); });
[338, 406, 472, 630, 721, 811, 993, 1085, 1176, 1334, 1402, 1468].forEach(l => { out += line(l, 1282, l, 1286, '#b40000', 1); });
out += text(8, 1301, '2022年', 'ax') + rect(494, 1284, 117, 21, '#000080') + text(496, 1301, '2022/10/27/四') + text(1728, 1301, '日线');
document.getElementById('signal').innerHTML = out;
```
